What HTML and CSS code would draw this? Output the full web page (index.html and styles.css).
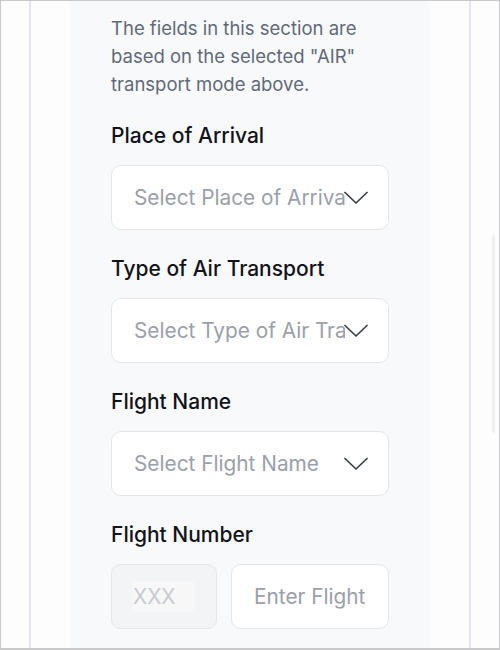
FILE: index.html
```html
<!DOCTYPE html>
<html lang="en">
<head>
    <meta charset="UTF-8">
    <meta name="viewport" content="width=device-width, initial-scale=1.0">
    <title>Air Transport Details</title>
    <link rel="stylesheet" href="styles.css">
</head>
<body>
    <div class="frame">
        <div class="page">
            <div class="panel">
                <p class="hint">The fields in this section are based on the selected "AIR" transport mode above.</p>

                <div class="form-group">
                    <label>Place of Arrival</label>
                    <div class="select">
                        <span class="placeholder">Select Place of Arrival</span>
                        <svg class="chevron" viewBox="0 0 24 14" width="24" height="14"><path d="M1 1.5 L12 12 L23 1.5" /></svg>
                    </div>
                </div>

                <div class="form-group">
                    <label>Type of Air Transport</label>
                    <div class="select">
                        <span class="placeholder">Select Type of Air Transport</span>
                        <svg class="chevron" viewBox="0 0 24 14" width="24" height="14"><path d="M1 1.5 L12 12 L23 1.5" /></svg>
                    </div>
                </div>

                <div class="form-group">
                    <label>Flight Name</label>
                    <div class="select">
                        <span class="placeholder">Select Flight Name</span>
                        <svg class="chevron" viewBox="0 0 24 14" width="24" height="14"><path d="M1 1.5 L12 12 L23 1.5" /></svg>
                    </div>
                </div>

                <div class="form-group">
                    <label>Flight Number</label>
                    <div class="flight-row">
                        <div class="code-box"><span class="code">XXX</span></div>
                        <div class="text-box"><span class="placeholder">Enter Flight Number</span></div>
                    </div>
                </div>
            </div>
        </div>
        <div class="scroll-thumb"></div>
    </div>
</body>
</html>
```

FILE: styles.css
```css
* {
    box-sizing: border-box;
}
body {
    margin: 0;
    font-family: Inter, 'Noto Sans', sans-serif;
    background: #fdfdfd;
}
.frame {
    position: relative;
    width: 500px;
    height: 650px;
    border: 1px solid #c9c9cb;
    border-bottom-width: 2px;
    background: #fdfdfd;
    overflow: hidden;
}
.page {
    height: 100%;
    margin: 0 28px;
    padding: 0 39px;
    border-left: 2px solid #e4e4ea;
    border-right: 2px solid #e4e4ea;
}
.panel {
    height: 100%;
    background: #f8f9fb;
    padding: 13px 41px 0 41px;
}
.hint {
    margin: 0 0 24px;
    font-size: 18.5px;
    line-height: 28px;
    color: #5f6a79;
}
.form-group {
    margin-bottom: 25px;
}
.form-group label {
    display: block;
    font-size: 21px;
    line-height: 28px;
    font-weight: 500;
    color: #121318;
    margin-bottom: 15px;
}
.select,
.text-box,
.code-box {
    position: relative;
    height: 65px;
    background: #fff;
    border: 1px solid #e3e5e9;
    border-radius: 10px;
    display: flex;
    align-items: center;
    padding: 0 43px 0 22px;
}
.placeholder {
    flex: 1;
    min-width: 0;
    overflow: hidden;
    font-size: 20.8px;
    color: #9aa0aa;
    white-space: nowrap;
}
.chevron {
    position: absolute;
    right: 20px;
    top: 25px;
    fill: none;
    stroke: #3b3f47;
    stroke-width: 1.7;
    stroke-linecap: round;
    stroke-linejoin: round;
}
.flight-row {
    display: flex;
    gap: 14px;
}
.code-box {
    width: 106px;
    flex: none;
    background: #f3f4f6;
    padding: 0 20px;
}
.code {
    font-size: 20.8px;
    color: #c8cbd0;
    background: #f7f7f8;
    padding: 3px 18px 3px 1px;
}
.text-box {
    flex: 1;
    min-width: 0;
    padding-right: 19px;
}
.scroll-thumb {
    position: absolute;
    right: 4px;
    top: 234px;
    width: 3px;
    height: 198px;
    border-radius: 2px;
    background: #efeff1;
}
```
